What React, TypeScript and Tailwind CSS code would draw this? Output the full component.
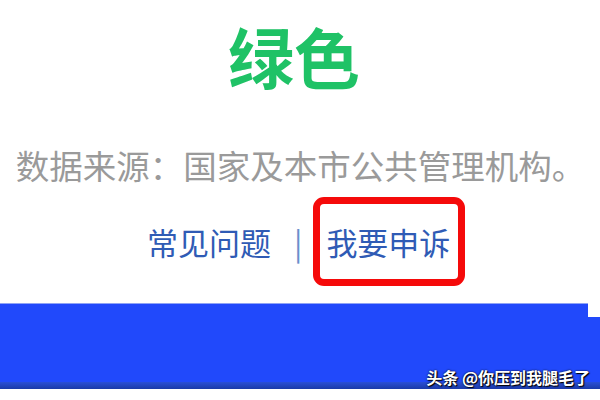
export default function App() {
  const cjk = { fontFamily: '"Noto Sans CJK SC", "Noto Sans", sans-serif' };
  return (
    <div className="w-[600px] h-[400px] bg-white overflow-hidden flex flex-col" style={cjk}>
      <div className="h-[20px]" />
      <div className="h-[70px] flex justify-center">
        <span className="text-[66px] leading-[70px] font-bold text-[#1fc266] pr-[12px]">绿色</span>
      </div>
      <div className="h-[56px]" />
      <div className="h-[38px] flex justify-center">
        <span className="text-[33.5px] leading-[38px] text-[#9a9a9a] whitespace-nowrap pl-[1px]">数据来源：国家及本市公共管理机构。</span>
      </div>
      <div className="h-[13px]" />
      <div className="h-[89px] flex items-center pl-[147px]">
        <span className="text-[31px] leading-none text-[#2f5bb5]">常见问题</span>
        <span className="text-[31px] leading-none text-[#6a8fcc] ml-[23px] mr-[11px]">|</span>
        <div className="h-[89px] w-[152px] border-[7px] border-[#f50a0a] rounded-[11px] flex items-center pl-[6px]">
          <span className="text-[31px] leading-none text-[#2f5bb5] whitespace-nowrap">我要申诉</span>
        </div>
      </div>
      <div className="h-[17px]" />
      <div className="h-[14px] w-[588px] bg-[#2149fb] border-t border-[#8fa3f5]" />
      <div className="relative">
        <div className="h-[65px] bg-[#2149fb]" />
        <div className="h-[7px] bg-gradient-to-b from-[#2a4fd6] to-[#1a3aa8]" />
        <span
          className="absolute right-[10px] bottom-[1px] text-[16px] leading-[22px] text-white font-bold whitespace-nowrap"
          style={{ textShadow: '1px 1px 1px #000, 0 0 2px #000' }}
        >
          头条 @你压到我腿毛了
        </span>
      </div>
    </div>
  );
}
